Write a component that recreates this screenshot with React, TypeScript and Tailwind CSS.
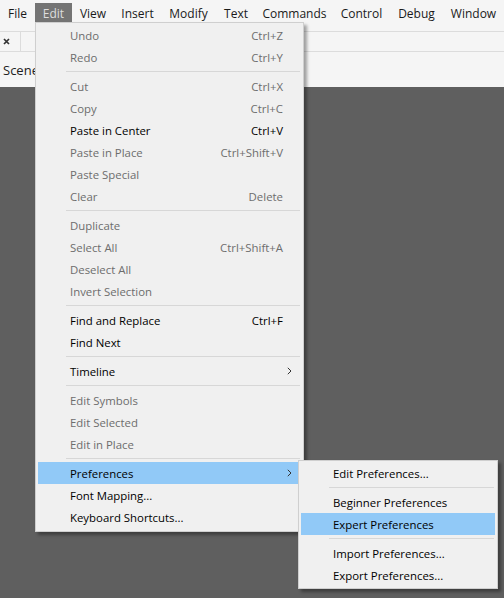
import React from "react";

type Item =
  | { sep: true }
  | { label: string; shortcut?: string; disabled?: boolean; sub?: boolean; active?: boolean };

const editItems: Item[] = [
  { label: "Undo", shortcut: "Ctrl+Z", disabled: true },
  { label: "Redo", shortcut: "Ctrl+Y", disabled: true },
  { sep: true },
  { label: "Cut", shortcut: "Ctrl+X", disabled: true },
  { label: "Copy", shortcut: "Ctrl+C", disabled: true },
  { label: "Paste in Center", shortcut: "Ctrl+V" },
  { label: "Paste in Place", shortcut: "Ctrl+Shift+V", disabled: true },
  { label: "Paste Special", disabled: true },
  { label: "Clear", shortcut: "Delete", disabled: true },
  { sep: true },
  { label: "Duplicate", disabled: true },
  { label: "Select All", shortcut: "Ctrl+Shift+A", disabled: true },
  { label: "Deselect All", disabled: true },
  { label: "Invert Selection", disabled: true },
  { sep: true },
  { label: "Find and Replace", shortcut: "Ctrl+F" },
  { label: "Find Next" },
  { sep: true },
  { label: "Timeline", sub: true },
  { sep: true },
  { label: "Edit Symbols", disabled: true },
  { label: "Edit Selected", disabled: true },
  { label: "Edit in Place", disabled: true },
  { sep: true },
  { label: "Preferences", sub: true, active: true },
  { label: "Font Mapping..." },
  { label: "Keyboard Shortcuts..." },
];

const prefItems: Item[] = [
  { label: "Edit Preferences..." },
  { sep: true },
  { label: "Beginner Preferences" },
  { label: "Expert Preferences", active: true },
  { sep: true },
  { label: "Import Preferences..." },
  { label: "Export Preferences..." },
];

const menuBar = [
  { label: "File", w: "w-[35px]" },
  { label: "Edit", w: "w-[37px]", open: true },
  { label: "View", w: "w-[42px]" },
  { label: "Insert", w: "w-[47px]" },
  { label: "Modify", w: "w-[55px]" },
  { label: "Text", w: "w-[40px]" },
  { label: "Commands", w: "w-[77px]" },
  { label: "Control", w: "w-[57px]" },
  { label: "Debug", w: "w-[53px]" },
  { label: "Window", w: "w-[61px]" },
];

function Chevron() {
  return (
    <svg width="5" height="8" viewBox="0 0 5 8" className="shrink-0">
      <path d="M0.8 0.8 L4 4 L0.8 7.2" fill="none" stroke="#333" strokeWidth="1" />
    </svg>
  );
}

function MenuRows({ items, sepLeft }: { items: Item[]; sepLeft: string }) {
  return (
    <>
      {items.map((it, i) => {
        if ("sep" in it) {
          return (
            <div key={i} className={`h-[7px] flex items-center ${sepLeft} pr-[1px]`}>
              <div className="h-px w-full bg-[#d7d7d7]" />
            </div>
          );
        }
        return (
          <div
            key={i}
            className={`h-[22px] flex items-center pt-[2px] pl-[32px] pr-[18px] ${
              it.active ? "bg-[#91c9f7]" : ""
            } ${it.disabled ? "text-[#6d6d6d]" : "text-black"}`}
          >
            <span className="flex-1 whitespace-nowrap">{it.label}</span>
            {it.shortcut && <span className="whitespace-nowrap">{it.shortcut}</span>}
            {it.sub && (
              <span className="-mr-[9px] -mt-[2px]">
                <Chevron />
              </span>
            )}
          </div>
        );
      })}
    </>
  );
}

export default function App() {
  return (
    <div
      className="relative w-[504px] h-[598px] overflow-hidden bg-[#5f5f5f] text-[11.4px] leading-none"
      style={{ fontFamily: '"Open Sans", "Noto Sans", sans-serif' }}
    >
      {/* top area */}
      <div className="bg-[#f5f5f5]">
        <div className="h-[32px] border-b border-[#dcdcdc]">
          <div className="flex pt-[3px] text-[12px]">
            {menuBar.map((m) => (
              <div
                key={m.label}
                className={`${m.w} h-[19px] flex items-center justify-center pt-[2px] ${
                  m.open ? "bg-[#747474] text-[#dedede]" : "text-[#1a1a1a]"
                }`}
              >
                {m.label}
              </div>
            ))}
          </div>
        </div>
        <div className="h-[20px] border-b border-[#dcdcdc] flex">
          <div className="w-[21px] border-r border-[#dcdcdc] flex items-center pl-[3px]">
            <svg width="7" height="7" viewBox="0 0 7 7">
              <path d="M1 1 L6 6 M6 1 L1 6" stroke="#333" strokeWidth="1.7" />
            </svg>
          </div>
        </div>
        <div className="h-[35px] flex items-center pl-[3px] pt-[2px] text-[13px] text-[#222]">Scene</div>
      </div>

      {/* Edit menu */}
      <div className="absolute left-[35px] top-[22px] w-[269px] bg-[#f0f0f0] border border-[#cfcfcf] pt-[1px] pb-[3px] px-[2px] shadow-[3px_3px_3px_rgba(0,0,0,0.35)]">
        <MenuRows items={editItems} sepLeft="pl-[28px]" />
      </div>

      {/* Preferences submenu */}
      <div className="absolute left-[298px] top-[460px] w-[200px] bg-[#f0f0f0] border border-[#cfcfcf] pt-[1px] pb-[2px] px-[2px] shadow-[3px_3px_3px_rgba(0,0,0,0.35)]">
        <MenuRows items={prefItems} sepLeft="pl-[28px]" />
      </div>
    </div>
  );
}
